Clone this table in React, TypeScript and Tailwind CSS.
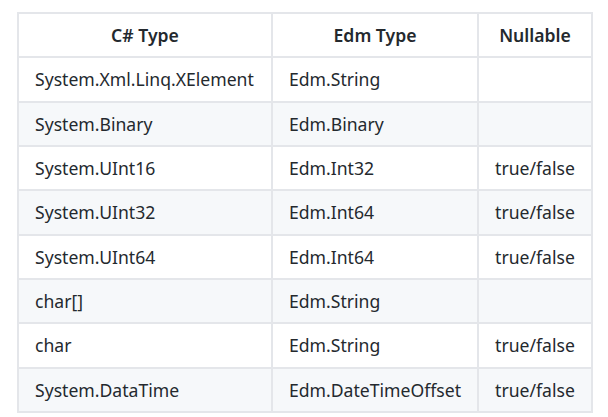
import React from "react";

const rows: [string, string, string][] = [
  ["System.Xml.Linq.XElement", "Edm.String", ""],
  ["System.Binary", "Edm.Binary", ""],
  ["System.UInt16", "Edm.Int32", "true/false"],
  ["System.UInt32", "Edm.Int64", "true/false"],
  ["System.UInt64", "Edm.Int64", "true/false"],
  ["char[]", "Edm.String", ""],
  ["char", "Edm.String", "true/false"],
  ["System.DataTime", "Edm.DateTimeOffset", "true/false"],
];

export default function App() {
  return (
    <div className="w-[608px] h-[417px] bg-white pt-[12px] pl-[17px]" style={{ fontFamily: '"Noto Sans", "Open Sans", sans-serif' }}>
      <table className="border-collapse table-fixed w-[574px] text-[17.6px] text-[#24292e]">
        <colgroup>
          <col className="w-[254px]" />
          <col className="w-[206px]" />
          <col className="w-[114px]" />
        </colgroup>
        <thead>
          <tr className="bg-white h-[44.33px]">
            <th className="border-2 border-[#e4e6ea] px-[16px] font-semibold text-center">C# Type</th>
            <th className="border-2 border-[#e4e6ea] px-[16px] font-semibold text-center">Edm Type</th>
            <th className="border-2 border-[#e4e6ea] px-[16px] font-semibold text-center">Nullable</th>
          </tr>
        </thead>
        <tbody>
          {rows.map((r, i) => (
            <tr key={i} className={(i % 2 === 1 ? "bg-[#f6f8fa]" : "bg-white") + " h-[44.33px]"}>
              <td className="border-2 border-[#e4e6ea] px-[16px] text-left whitespace-nowrap">{r[0]}</td>
              <td className="border-2 border-[#e4e6ea] px-[16px] text-left whitespace-nowrap">{r[1]}</td>
              <td className="border-2 border-[#e4e6ea] px-[16px] text-center whitespace-nowrap">{r[2]}</td>
            </tr>
          ))}
        </tbody>
      </table>
    </div>
  );
}
